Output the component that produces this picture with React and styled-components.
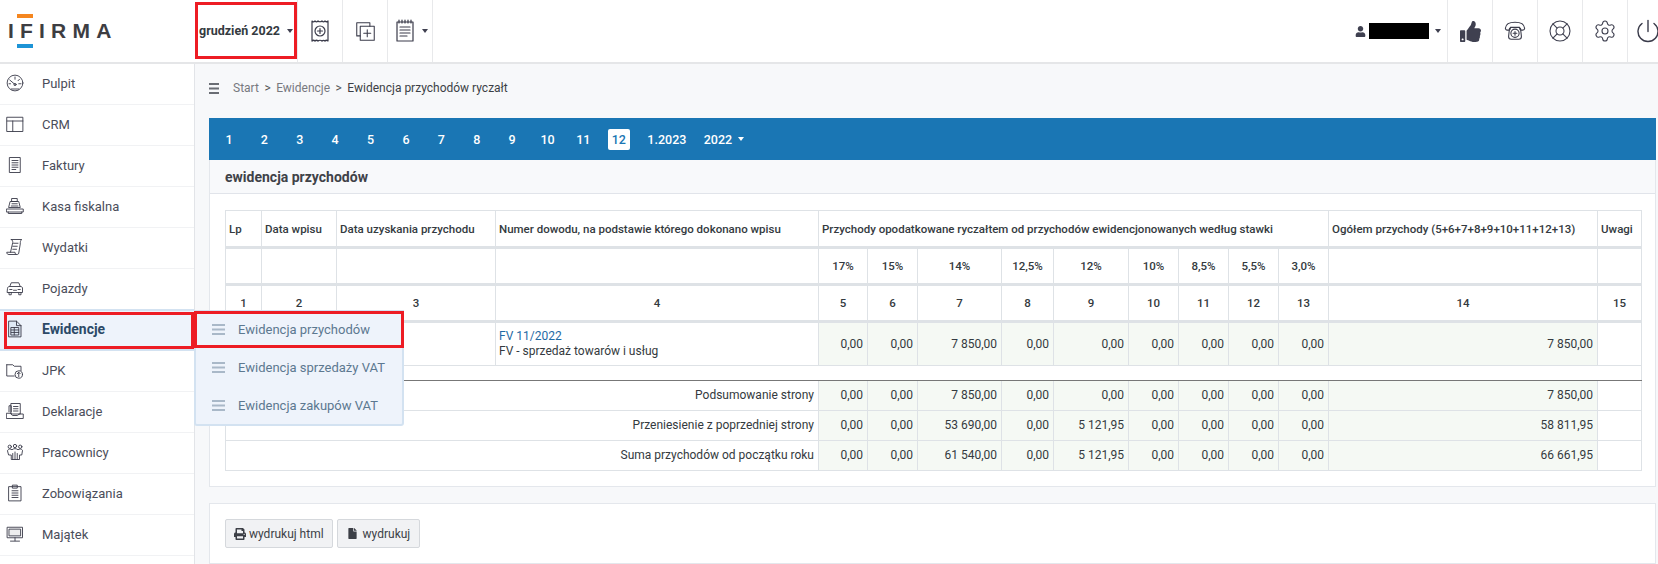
import React from 'react'
import styled, { createGlobalStyle } from 'styled-components'
import { FaThumbsUp, FaUser, FaPrint, FaFile } from 'react-icons/fa'
import { LifeBuoy, Settings } from 'lucide-react'

const Global = createGlobalStyle`
  html, body { margin: 0; padding: 0; height: 100%; overflow: hidden; }
  body { background: #f7f8fa; font-family: Roboto, "Liberation Sans", Arial, sans-serif; color: #343a40; }
  * { box-sizing: border-box; }
`

const Page = styled.div`
  width: 1658px;
  height: 564px;
  display: flex;
  flex-direction: column;
`

const TopBar = styled.header`
  height: 64px;
  flex: none;
  display: flex;
  overflow: hidden;
  background: #fff;
  border-bottom: 2px solid #e5e6e8;
`

const LogoCell = styled.div`
  width: 195px;
  flex: none;
  padding: 22px 0 0 8px;
`

const Logo = styled.div`
  position: relative;
  font-family: "Liberation Sans", Arial, sans-serif;
  font-weight: 700;
  font-size: 21px;
  line-height: 18px;
  letter-spacing: 6.2px;
  color: #3d3d42;
  &::before, &::after {
    content: '';
    position: absolute;
    left: 9px;
    width: 16px;
    height: 4px;
  }
  &::before { top: -8px; background: #f5861f; }
  &::after { top: 22px; background: #1d94d6; }
`

const DateBox = styled.div`
  width: 102px;
  height: 57px;
  margin-top: 2px;
  flex: none;
  border: 3px solid #ed1c24;
  display: flex;
  align-items: center;
  padding-left: 1px;
  gap: 7px;
  font-size: 12.5px;
  font-weight: 700;
  white-space: nowrap;
  color: #343a40;
`

const Caret = styled.i`
  display: inline-block;
  border-top: 4px solid ${p => p.$color || '#3f4050'};
  border-left: 3.5px solid transparent;
  border-right: 3.5px solid transparent;
`

const ToolCell = styled.div`
  width: 45px;
  flex: none;
  display: flex;
  align-items: center;
  justify-content: center;
  gap: 5px;
  border-left: 1px solid #e8e9eb;
  color: #3f4050;
`

const PowerCell = styled(ToolCell)`
  margin-right: -14px;
  padding-right: 5px;
`

const Spacer = styled.div`
  flex: 1;
`

const UserBox = styled.div`
  display: flex;
  align-items: center;
  margin-right: 6px;
  color: #3f4050;
`

const Redacted = styled.span`
  width: 60px;
  height: 16px;
  margin: 0 6px 0 3px;
  background: #000;
`

const Body = styled.div`
  flex: 1;
  display: flex;
  min-height: 0;
`

const Sidebar = styled.nav`
  width: 195px;
  flex: none;
  background: #fff;
  border-right: 1px solid #e2e4e8;
`

const SideRow = styled.div`
  position: relative;
  height: 41px;
  display: flex;
  align-items: center;
  gap: 18px;
  padding: 0 0 2px 6px;
  font-size: ${p => p.$active ? '13.9px' : '13px'};
  color: ${p => p.$active ? '#2c4a68' : '#4a4d5a'};
  font-weight: ${p => p.$active ? 700 : 400};
  background: ${p => p.$active ? '#eef3fb' : '#fff'};
  border-bottom: 1px solid #f1f2f4;
  ${p => p.$active && `
    margin-top: -1px;
    border-top: 2px solid #d3e2f1;
    border-bottom: 2px solid #d3e2f1;
    height: 42px;
    &::after {
      content: '';
      position: absolute;
      top: 1px;
      bottom: 0;
      left: 4px;
      right: 0;
      border: 3px solid #ed1c24;
    }
  `}
`

const Flyout = styled.div`
  position: absolute;
  z-index: 5;
  left: 100%;
  top: -1px;
  width: 210px;
  height: 116px;
  background: #eef3fb;
  border: 2px solid #d3e2f1;
  border-top-width: 1px;
  border-radius: 0 0 3px 3px;
  font-weight: 400;
`

const FlyItem = styled.div`
  position: relative;
  height: 37px;
  margin-bottom: 1px;
  display: flex;
  align-items: center;
  gap: 13px;
  padding-left: 16px;
  font-size: 13px;
  color: #5c7890;
  ${p => p.$marked && `
    margin-left: -2px;
    margin-right: -2px;
    padding-left: 15px;
    border: 3px solid #ed1c24;
  `}
`

const Main = styled.main`
  flex: 1;
  min-width: 0;
  padding: 0 2px 0 14px;
`

const Crumbs = styled.div`
  height: 54px;
  padding-bottom: 6px;
  display: flex;
  align-items: center;
  gap: 0;
  font-size: 12px;
  color: #77797f;
`

const CrumbBars = styled.span`
  display: flex;
  margin-right: 14px;
`

const CrumbSep = styled.span`
  margin: 0 5.5px;
  color: #555;
`

const CrumbNow = styled.span`
  color: #3c3f46;
`

const MonthBar = styled.div`
  height: 42px;
  display: flex;
  align-items: center;
  gap: 13.4px;
  padding-left: 9px;
  background: #1a76b4;
`

const Month = styled.span`
  min-width: 22px;
  height: 21px;
  padding: 0 4px;
  margin-left: ${p => p.$tight ? '-4px' : '0'};
  display: flex;
  align-items: center;
  justify-content: center;
  gap: 6px;
  border-radius: 2px;
  font-size: 12.5px;
  font-weight: 500;
  color: ${p => p.$active ? '#1a76b4' : '#fff'};
  background: ${p => p.$active ? '#fff' : 'transparent'};
`

const Card = styled.section`
  background: #fff;
  border: 1px solid #e4e7ec;
  border-top: ${p => p.$flush ? '0' : '1px solid #e4e7ec'};
  margin-bottom: 16px;
`

const CardHead = styled.div`
  height: 34px;
  display: flex;
  align-items: center;
  padding-left: 15px;
  background: #f8f9fb;
  border-bottom: 1px solid #e1e4ea;
  font-size: 14px;
  font-weight: 700;
  color: #3f4248;
`

const CardBody = styled.div`
  padding: 16px 14px 15px 15px;
`

const Table = styled.table`
  width: 1416px;
  table-layout: fixed;
  border-collapse: collapse;
  font-size: 12px;
  color: #343a40;
`

const Th = styled.th`
  height: ${p => p.$h || 37}px;
  padding: 0 3px;
  border: 1px solid #dee2e6;
  border-bottom: 3px solid #dee2e6;
  font-size: 11.5px;
  font-weight: 500;
  text-align: ${p => p.$left ? 'left' : 'center'};
  white-space: nowrap;
  overflow: hidden;
`

const Td = styled.td`
  height: ${p => p.$h || 30}px;
  padding: 0 ${p => p.$left ? 3 : 4}px;
  border: 1px solid #dee2e6;
  text-align: ${p => p.$left ? 'left' : 'right'};
  background: ${p => p.$money ? '#f5f9f4' : '#fff'};
  white-space: nowrap;
  line-height: 15px;
`

const GapCell = styled.td`
  height: 15px;
  padding: 0;
  border: 1px solid #dee2e6;
  border-bottom: 1px solid #777;
`

const DocLink = styled.a`
  color: #1f6aa5;
  display: block;
`

const Actions = styled.div`
  padding: 15px;
  height: 59px;
  display: flex;
  gap: 4px;
`

const Btn = styled.button`
  height: 29px;
  padding: 0 ${p => p.$wide ? 8 : 9}px;
  display: flex;
  align-items: center;
  gap: ${p => p.$wide ? 3 : 5}px;
  background: #f1f2f4;
  border: 1px solid #d5d8dc;
  border-radius: 2px;
  font-family: inherit;
  font-size: 12px;
  color: #3c3f46;
`

const Svg = ({ size = 18, children, sw = 1.2 }) => (
  <svg width={size} height={size} viewBox="0 0 24 24" fill="none" stroke="#3a3b4a" strokeWidth={sw} strokeLinecap="round" strokeLinejoin="round" style={{ flex: 'none' }}>
    {children}
  </svg>
)

const icons = {
  pulpit: <><circle cx="12" cy="12" r="10.5" /><path d="M5 8l7 6M12 4v3M18 7l-2 2M20 13h-3M4 13h2" /><circle cx="12" cy="14" r="1.5" /><path d="M7 20h10" /></>,
  crm: <><rect x="1.5" y="3" width="21" height="19" /><path d="M1.5 8h21M9 8v14" /></>,
  faktury: <><path d="M5 2h14v20H5z" /><path d="M8 6h8M8 9h8M8 12h8M8 15h8M8 18h5" /></>,
  kasa: <><path d="M8 2h7v4H8zM6 6h11l2 8H4zM1 16h22v4H1zM3 20v2h18v-2" /><path d="M8 9h7M7 12h9" /></>,
  wydatki: <><path d="M7 2h14c-2 1-2 4-2 6l-2 12c0 2-2 2-3 2H4c-2 0-3-1-3-3h11c0 2 1 3 2 3" /><path d="M7 2c2 0 2 3 2 4l-3 13M10 7h6M9 11h6M9 15h5" /></>,
  pojazdy: <><path d="M5 10l2-5h10l2 5M2 12c0-1 1-2 3-2h14c2 0 3 1 3 2v6H2zM4 18v3h3v-3M17 18v3h3v-3" /><path d="M5 14h3M16 14h3M10 15h4" /></>,
  ewidencje: <><path d="M4 1.5h10l6 6v15H4z" fill="#dfe9f5" /><path d="M14 1.5v6h6M7 10h10v10H7zM7 13.3h10M7 16.6h10M11 10v10" /></>,
  jpk: <><path d="M1 5h8l2 2h9v6M1 5v15h10" /><circle cx="17" cy="18" r="5" /><path d="M17 21v-6M15 17l2-2 2 2" /></>,
  deklaracje: <><path d="M7 13V5h-3v8M7 2h12v14H7zM10 6h6M10 9h6M10 12h6" /><path d="M1 15h6c0 2 1 3 2 3h6c1 0 2-1 2-2h6v6H1z" /></>,
  pracownicy: <><circle cx="5" cy="5" r="2.2" /><circle cx="12" cy="4" r="2.2" /><circle cx="19" cy="5" r="2.2" /><path d="M2 10c0-1 2-2 3-2s2 .5 3 1c1-1 3-1.500 4-1.500s3 .5 4 1.500c1-.5 2-1 3-1s3 1 3 2l-1 6h-3v6H7v-6H4zM12 12v10M9 14v8M15 14v8" /></>,
  zobowiazania: <><rect x="4" y="3.500" width="16" height="19" /><path d="M9 1.500h6v4H9zM8 9h8M8 12h8M8 15h8M8 18h8" /></>,
  majatek: <><rect x="2" y="3" width="20" height="14" /><rect x="4.500" y="5.500" width="15" height="9" fill="#eee" /><path d="M12 17v4M6 21.500h12" /></>,
}

const menu = [
  ['pulpit', 'Pulpit'], ['crm', 'CRM'], ['faktury', 'Faktury'], ['kasa', 'Kasa fiskalna'],
  ['wydatki', 'Wydatki'], ['pojazdy', 'Pojazdy'], ['ewidencje', 'Ewidencje'], ['jpk', 'JPK'],
  ['deklaracje', 'Deklaracje'], ['pracownicy', 'Pracownicy'], ['zobowiazania', 'Zobowiązania'], ['majatek', 'Majątek'],
]

const Bars = ({ color = '#a9b8c8', w = 13 }) => (
  <svg width={w} height="11" viewBox="0 0 13 11" preserveAspectRatio="none" fill={color} style={{ flex: 'none' }}>
    <rect y="0" width="13" height="2" /><rect y="4.500" width="13" height="2" /><rect y="9" width="13" height="2" />
  </svg>
)

const widths = [36, 75, 159, 323, 49, 50, 84, 52, 75, 50, 50, 50, 50, 269, 44]
const rates = ['17%', '15%', '14%', '12,5%', '12%', '10%', '8,5%', '5,5%', '3,0%']

const row = (a, b, c) => ['0,00', '0,00', a, '0,00', b, '0,00', '0,00', '0,00', '0,00', c]
const summary = [
  ['Podsumowanie strony', row('7 850,00', '0,00', '7 850,00')],
  ['Przeniesienie z poprzedniej strony', row('53 690,00', '5 121,95', '58 811,95')],
  ['Suma przychodów od początku roku', row('61 540,00', '5 121,95', '66 661,95')],
]

const App = () => (
  <Page>
    <Global />
    <TopBar>
      <LogoCell><Logo>IFIRMA</Logo></LogoCell>
      <DateBox>grudzień 2022 <Caret /></DateBox>
      <ToolCell>
        <Svg size={24}><path d="M4 2c1 1 2 1 3 0 1 1 2 1 3 0 1 1 3 1 4 0 1 1 2 1 3 0 1 1 2 1 3 0v20c-1-1-2-1-3 0-1-1-2-1-3 0-1-1-3-1-4 0-1-1-2-1-3 0-1-1-2-1-3 0z" /><circle cx="12" cy="12" r="5" /><path d="M12 9.500v5M9.500 12h5" /></Svg>
      </ToolCell>
      <ToolCell>
        <Svg size={21}><path d="M17 6V2H2v15h4" /><rect x="6" y="6" width="16" height="16" /><path d="M14 10v8M10 14h8" /></Svg>
      </ToolCell>
      <ToolCell>
        <Svg size={24}><rect x="4" y="3" width="16" height="19" /><path d="M6 1v3M9 1v3M12 1v3M15 1v3M18 1v3M7 8h10M7 11h10M7 14h10M7 17h7" /></Svg>
        <Caret />
      </ToolCell>
      <ToolCell />
      <Spacer />
      <UserBox><FaUser size={11} /><Redacted /><Caret /></UserBox>
      <ToolCell><FaThumbsUp size={21} /></ToolCell>
      <ToolCell>
        <Svg size={22}><path d="M1.500 9C2 4 7 2.500 12 2.500S22 4 22.500 9c0 1-1 2-2 2h-2c-1 0-1.500-1-1.500-3H7c0 2-.5 3-1.500 3h-2c-1 0-2-1-2-2z" /><path d="M6 9l-1 9c0 2 1 3 3 3h8c2 0 3-1 3-3l-1-9" /><circle cx="12" cy="14.500" r="4.500" /><path d="M12 12.500v4M10 14.500h4" /></Svg>
      </ToolCell>
      <ToolCell><LifeBuoy size={24} strokeWidth={1.1} /></ToolCell>
      <ToolCell><Settings size={24} strokeWidth={1.1} /></ToolCell>
      <PowerCell>
        <Svg size={24} sw={1.4}><path d="M12 1.500v11" /><path d="M6 4.500a10 10 0 1 0 12 0" /></Svg>
      </PowerCell>
    </TopBar>
    <Body>
      <Sidebar>
        {menu.map(([key, label]) => (
          <SideRow key={key} $active={key === 'ewidencje'}>
            <Svg size={18}>{icons[key]}</Svg>
            {label}
            {key === 'ewidencje' && (
              <Flyout>
                <FlyItem $marked><Bars />Ewidencja przychodów</FlyItem>
                <FlyItem><Bars />Ewidencja sprzedaży VAT</FlyItem>
                <FlyItem><Bars />Ewidencja zakupów VAT</FlyItem>
              </Flyout>
            )}
          </SideRow>
        ))}
      </Sidebar>
      <Main>
        <Crumbs>
          <CrumbBars><Bars color="#6a6d74" w={10} /></CrumbBars>
          Start<CrumbSep>&gt;</CrumbSep>Ewidencje<CrumbSep>&gt;</CrumbSep><CrumbNow>Ewidencja przychodów ryczałt</CrumbNow>
        </Crumbs>
        <MonthBar>
          {[1, 2, 3, 4, 5, 6, 7, 8, 9, 10, 11, 12].map(m => <Month key={m} $active={m === 12}>{m}</Month>)}
          <Month>1.2023</Month>
          <Month $tight>2022 <Caret $color="#fff" /></Month>
        </MonthBar>
        <Card $flush>
          <CardHead>ewidencja przychodów</CardHead>
          <CardBody>
            <Table>
              <colgroup>{widths.map((w, i) => <col key={i} style={{ width: w }} />)}</colgroup>
              <thead>
                <tr>
                  <Th $left>Lp</Th>
                  <Th $left>Data wpisu</Th>
                  <Th $left>Data uzyskania przychodu</Th>
                  <Th $left>Numer dowodu, na podstawie którego dokonano wpisu</Th>
                  <Th $left colSpan={9}>Przychody opodatkowane ryczałtem od przychodów ewidencjonowanych według stawki</Th>
                  <Th $left>Ogółem przychody (5+6+7+8+9+10+11+12+13)</Th>
                  <Th $left>Uwagi</Th>
                </tr>
                <tr>
                  <Th /><Th /><Th /><Th />
                  {rates.map(r => <Th key={r}>{r}</Th>)}
                  <Th /><Th />
                </tr>
                <tr>
                  {widths.map((_, i) => <Th key={i}>{i + 1}</Th>)}
                </tr>
              </thead>
              <tbody>
                <tr>
                  <Td $h={44} /><Td $h={44} /><Td $h={44} />
                  <Td $h={44} $left>
                    <DocLink>FV 11/2022</DocLink>
                    FV - sprzedaż towarów i usług
                  </Td>
                  {row('7 850,00', '0,00', '7 850,00').map((v, i) => <Td key={i} $h={44} $money>{v}</Td>)}
                  <Td $h={44} />
                </tr>
                <tr><GapCell colSpan={15} /></tr>
                {summary.map(([label, vals]) => (
                  <tr key={label}>
                    <Td colSpan={4}>{label}</Td>
                    {vals.map((v, i) => <Td key={i} $money>{v}</Td>)}
                    <Td />
                  </tr>
                ))}
              </tbody>
            </Table>
          </CardBody>
        </Card>
        <Card>
          <Actions>
            <Btn $wide><FaPrint size={12} /> wydrukuj html</Btn>
            <Btn><FaFile size={11} /> wydrukuj</Btn>
          </Actions>
        </Card>
      </Main>
    </Body>
  </Page>
)

export default App
